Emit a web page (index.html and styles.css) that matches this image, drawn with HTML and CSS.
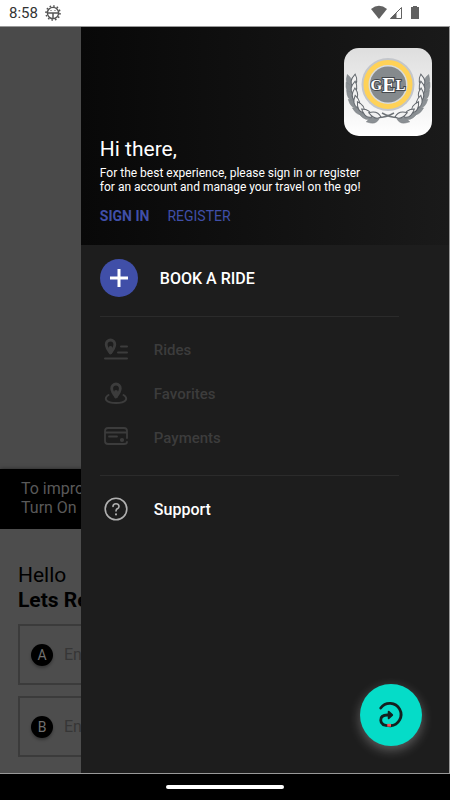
FILE: index.html
```html
<!DOCTYPE html>
<html lang="en">
<head>
    <meta charset="UTF-8">
    <meta name="viewport" content="width=device-width, initial-scale=1.0">
    <title>GEL Rides</title>
    <link rel="stylesheet" href="styles.css">
</head>
<body>

    <header class="status-bar">
        <span class="clock">8:58</span>
        <svg class="status-gear" viewBox="0 0 16 16" fill="none" stroke="#555">
            <circle cx="8" cy="8" r="5.6" stroke-width="1.4"/>
            <circle cx="8" cy="8" r="7" stroke-width="1.6" stroke-dasharray="1.6 2.06"/>
            <path d="M2.5 8h11M8 8v5.5" stroke-width="1.5"/>
            <path d="M5.5 5.5h1M9.5 5.5h1"/>
        </svg>
        <svg class="status-icons" viewBox="0 0 49 16" fill="#616161">
            <path d="M0 4Q8 -2.500 16 4L8 14z"/>
            <path d="M30.500 2.500V13.500H19.500z" fill="none" stroke="#616161"/>
            <path d="M25.500 7.500V13.500H19z"/>
            <path d="M42 1h4v1h2v12h-8V2h2z"/>
        </svg>
    </header>

    <div class="screen">
        <main class="home">
            <div class="notice">To improve your pickup<br>Turn On Location</div>
            <div class="booking">
                <h2>Hello<br><strong>Lets Reserve</strong></h2>
                <div class="stop">
                    <label class="stop-badge" for="pickup">A</label>
                    <input id="pickup" type="text" placeholder="Enter pickup">
                </div>
                <div class="stop">
                    <label class="stop-badge" for="dropoff">B</label>
                    <input id="dropoff" type="text" placeholder="Enter drop-off">
                </div>
            </div>
        </main>

        <aside class="drawer">
            <div class="drawer-header">
                <svg class="logo" viewBox="0 0 88 88">
                    <defs>
                        <linearGradient id="tile" x1="0" y1="0" x2="0" y2="1">
                            <stop offset="0" stop-color="#dedede"/>
                            <stop offset="1" stop-color="#ffffff"/>
                        </linearGradient>
                        <path id="leaf" d="M0 0Q-6 -4 -1 -13Q5 -6 0 0z"/>
                        <g id="laurel">
                            <path d="M9 32Q5 61 30 69Q39 71 50 65" fill="none" stroke="#6f7478" stroke-width="1.500"/>
                            <g fill="#8b9094" stroke="#7b8084" stroke-width=".5">
                                <use href="#leaf" transform="translate(7 39) rotate(-12)"/>
                                <use href="#leaf" transform="translate(8 46) rotate(-22)"/>
                                <use href="#leaf" transform="translate(10 53) rotate(-30)"/>
                                <use href="#leaf" transform="translate(14 60) rotate(-44)"/>
                                <use href="#leaf" transform="translate(20 66) rotate(-58)"/>
                                <use href="#leaf" transform="translate(28 70) rotate(-70)"/>
                                <use href="#leaf" transform="translate(35 71) rotate(-98)"/>
                            </g>
                            <g fill="#f1f1f1" stroke="#62676d" stroke-width="1">
                                <use href="#leaf" transform="translate(9 39) rotate(14)"/>
                                <use href="#leaf" transform="translate(9 46) rotate(14)"/>
                                <use href="#leaf" transform="translate(11 53) rotate(4)"/>
                                <use href="#leaf" transform="translate(14 60) rotate(-8)"/>
                                <use href="#leaf" transform="translate(20 65) rotate(-26)"/>
                                <use href="#leaf" transform="translate(28 69) rotate(-48)"/>
                                <use href="#leaf" transform="translate(37 69) rotate(-66)"/>
                            </g>
                        </g>
                    </defs>
                    <rect width="88" height="88" rx="15" fill="url(#tile)"/>
                    <use href="#laurel"/>
                    <use href="#laurel" transform="translate(88 0) scale(-1 1)"/>
                    <circle cx="44" cy="36.500" r="26.500" fill="#c3c6cb"/>
                    <circle cx="44" cy="36.500" r="22" fill="#d9dbdc" stroke="#ffd257" stroke-width="5"/>
                    <circle cx="44" cy="36.500" r="18" fill="#858a8d"/>
                    <text class="logo-text" x="44" y="42">G<tspan class="logo-tall" dy="2">E</tspan><tspan dy="-2">L</tspan></text>
                </svg>
                <h1>Hi there,</h1>
                <p>For the best experience, please sign in or register for an account and manage your travel on the go!</p>
                <div class="account-links">
                    <a class="sign-in" href="#">SIGN IN</a>
                    <a href="#">REGISTER</a>
                </div>
            </div>

            <nav class="menu">
                <a class="book" href="#">
                    <svg viewBox="0 0 38 38">
                        <circle cx="19" cy="19" r="19" fill="#404fa8"/>
                        <path d="M19 10v18M10 19h18" stroke="#fff" stroke-width="3"/>
                    </svg>
                    BOOK A RIDE
                </a>
                <ul class="menu-group">
                    <li><a class="disabled" href="#">
                        <svg viewBox="0 0 24 24" fill="none" stroke="currentColor" stroke-width="2" stroke-linecap="round">
                            <path d="M6.500 2a4.300 4.300 0 0 0-4.300 4.300c0 3.600 4.300 8.700 4.300 8.700s4.300-5.100 4.300-8.700A4.300 4.300 0 0 0 6.500 2z" stroke-width="2.800" stroke-linejoin="round"/>
                            <path d="M6.500 10v4" stroke-width="4"/>
                            <path d="M17 8.500h6M14 14.500h9M1 20.500h22"/>
                        </svg>
                        Rides
                    </a></li>
                    <li><a class="disabled" href="#">
                        <svg viewBox="0 0 24 24" fill="none" stroke="currentColor" stroke-width="2" stroke-linecap="round">
                            <path d="M12 2a4.300 4.300 0 0 0-4.300 4.300c0 3.600 4.300 8.700 4.300 8.700s4.300-5.100 4.300-8.700A4.300 4.300 0 0 0 12 2z" stroke-width="2.800" stroke-linejoin="round"/>
                            <path d="M12 10v4" stroke-width="4"/>
                            <path d="M4.500 13C-1 16.500 2 21 12 21S25 16.500 19.500 13"/>
                        </svg>
                        Favorites
                    </a></li>
                    <li><a class="disabled" href="#">
                        <svg viewBox="0 0 24 24" fill="none" stroke="currentColor" stroke-width="1.800" stroke-linecap="round">
                            <path d="M23 12V5q0-3-3-3H4Q1 2 1 5v10q0 3 3 3h16q3 0 3-2M1 6.500h22M5 10.500h8"/>
                            <circle cx="18" cy="14" r="1.200" fill="currentColor"/>
                        </svg>
                        Payments
                    </a></li>
                </ul>
                <ul class="menu-group">
                    <li><a class="support" href="#">
                        <svg viewBox="0 0 24 24" fill="none" stroke="#b0b0b0" stroke-width="1.600" stroke-linecap="round">
                            <circle cx="12" cy="12" r="10.800"/>
                            <path d="M9 9.500Q9 6.700 12 6.700T15 9.500Q15 11 13.300 11.800Q12 12.500 12 14"/>
                            <path d="M12 17.300v.1" stroke-width="2"/>
                        </svg>
                        Support
                    </a></li>
                </ul>
            </nav>
        </aside>

        <button class="fab" type="button" aria-label="Return ride">
            <svg viewBox="0 0 30 30" fill="none" stroke="#14201f" stroke-width="3" stroke-linecap="round">
                <path d="M4 7.500A12 12 0 1 1 14.500 26.500Q4 26.500 4 20.500Q4 15 11 15h3"/>
                <path d="M12.500 11.500l3.800 3.500-3.800 3.500z" stroke-width="2" fill="#14201f" stroke-linejoin="round"/>
                <path d="M11 26h4" stroke="#ff4b55" stroke-linecap="butt"/>
            </svg>
        </button>
    </div>

    <footer class="gesture-bar"><span></span></footer>

</body>
</html>
```
FILE: styles.css
```css
* {
    box-sizing: border-box;
}

body {
    margin: 0;
    min-height: 100vh;
    display: flex;
    flex-direction: column;
    font-family: Roboto, 'Noto Sans', sans-serif;
    background-color: #000;
}

a {
    color: inherit;
    text-decoration: none;
}

ul {
    list-style: none;
    margin: 0;
    padding: 0;
}

/* --- Status bar --- */
.status-bar {
    display: flex;
    align-items: center;
    gap: 7px;
    height: 26px;
    padding: 0 30px 0 9px;
    background-color: #fff;
    color: #333;
}

.clock {
    font-size: 15px;
}

.status-gear {
    width: 16px;
    height: 16px;
}

.status-icons {
    width: 49px;
    height: 16px;
    margin-left: auto;
}

/* --- Home page behind the drawer --- */
.screen {
    position: relative;
    flex: 1;
    display: flex;
    border: solid #999;
    border-width: 1px 1px 1px 0;
    overflow: hidden;
}

.home {
    flex: 1;
    display: flex;
    flex-direction: column;
    justify-content: flex-end;
    background-color: #4a4a4a;
}

.notice {
    padding: 10px 21px 12px;
    background-color: #000;
    box-shadow: 0 0 4px rgba(0, 0, 0, 0.5);
    color: #595959;
    font-size: 16px;
    line-height: 19px;
}

.booking {
    display: flex;
    flex-direction: column;
    gap: 11px;
    padding: 34px 18px 16px;
    background-color: #4d4d4d;
}

h2 {
    margin: 0;
    font-size: 21px;
    font-weight: 400;
    line-height: 25px;
    color: #000;
}

.stop {
    display: flex;
    align-items: center;
    gap: 11px;
    height: 61px;
    padding: 0 11px;
    border: 2px solid #3b3b3b;
}

.stop-badge {
    flex: none;
    width: 22px;
    border-radius: 50%;
    background-color: #000;
    box-shadow: 0 2px 3px rgba(0, 0, 0, 0.3);
    color: #707070;
    font-size: 14px;
    line-height: 22px;
    text-align: center;
}

.stop input {
    flex: 1;
    min-width: 0;
    padding: 0;
    border: 0;
    background: none;
    font: 16px Roboto, sans-serif;
}

.stop input::placeholder {
    color: #363636;
}

/* --- Drawer --- */
.drawer {
    position: absolute;
    top: 0;
    right: 0;
    bottom: 0;
    width: 82%;
    background-color: #1d1d1d;
    color: #fff;
}

.drawer-header {
    display: flex;
    flex-direction: column;
    padding: 21px 17px 21px 19px;
    background: linear-gradient(to right, #080808, #1a1a1a);
}

.logo {
    width: 88px;
    height: 88px;
    align-self: flex-end;
}

.logo-text {
    fill: #fff;
    stroke: #43474b;
    stroke-width: 2px;
    paint-order: stroke;
    font-family: 'Liberation Serif', serif;
    font-size: 15px;
    font-weight: 700;
    text-anchor: middle;
}

.logo-tall {
    font-size: 20px;
}

h1 {
    margin: 0;
    font-size: 21px;
    font-weight: 400;
    line-height: 26px;
}

.drawer-header p {
    max-width: 272px;
    margin: 4px 0 14px;
    font-size: 12px;
    line-height: 14px;
}

.account-links {
    display: flex;
    gap: 18px;
    color: #404fa8;
    font-size: 14px;
    line-height: 16px;
}

.sign-in {
    font-weight: 700;
}

.menu {
    padding: 14px 50px 0 19px;
}

.menu a {
    display: flex;
    align-items: center;
    font-size: 16px;
    font-weight: 500;
}

.menu .book {
    gap: 22px;
    padding-bottom: 19px;
}

.book svg {
    width: 38px;
    height: 38px;
}

.menu-group {
    padding: 11px 4px 15px;
    border-top: 1px solid #2b2b2b;
}

.menu-group a {
    gap: 26px;
    height: 44px;
}

.menu-group svg {
    width: 24px;
    height: 24px;
}

.menu .disabled {
    color: #3c3c3c;
    font-size: 15px;
}

/* --- Floating button --- */
.fab {
    position: absolute;
    right: 27px;
    bottom: 27px;
    display: flex;
    align-items: center;
    justify-content: center;
    width: 62px;
    height: 62px;
    padding: 0;
    border: 0;
    border-radius: 50%;
    background-color: #05dcc8;
    box-shadow: 0 4px 12px rgba(255, 255, 255, 0.3);
}

.fab svg {
    width: 28px;
    height: 28px;
}

/* --- Gesture bar --- */
.gesture-bar {
    display: flex;
    align-items: center;
    justify-content: center;
    height: 26px;
    background-color: #000;
}

.gesture-bar span {
    width: 118px;
    height: 4px;
    border-radius: 2px;
    background-color: #fff;
}
```
